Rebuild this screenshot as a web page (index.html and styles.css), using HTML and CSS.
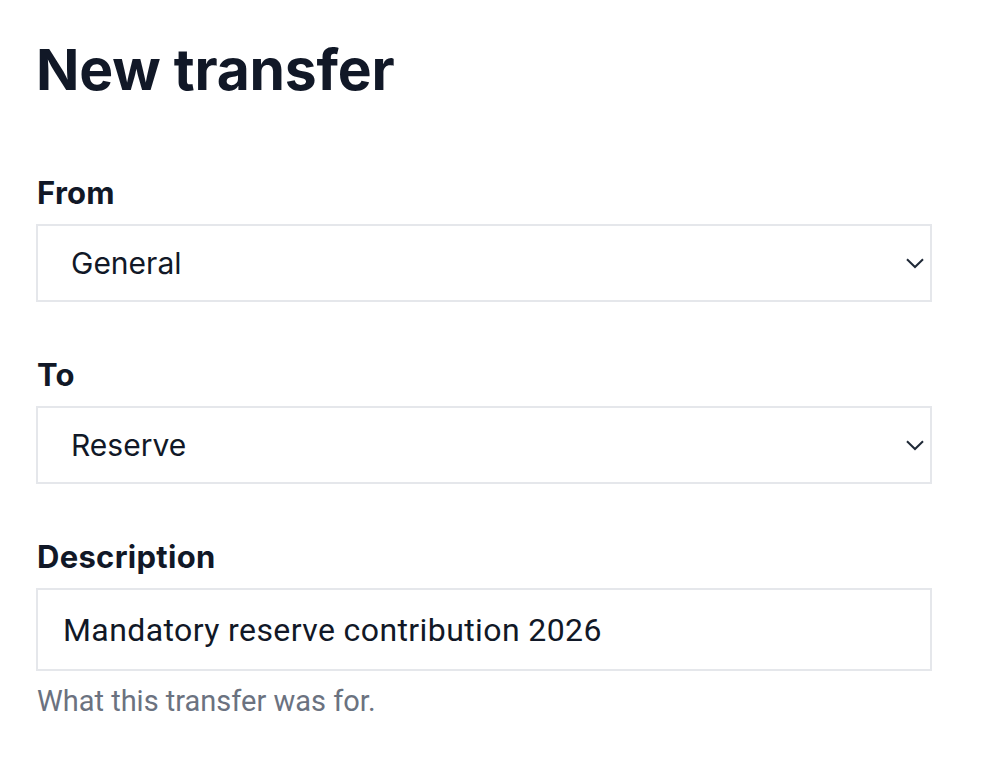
FILE: index.html
```html
<!DOCTYPE html>
<html lang="en">
<head>
<meta charset="utf-8">
<title>New transfer</title>
<link rel="stylesheet" href="styles.css">
</head>
<body>
<main class="page">
  <h1 class="title">New transfer</h1>
  <form class="form">
    <div class="field">
      <label class="label" for="from">From</label>
      <div class="select-wrap">
        <select class="select" id="from">
          <option>General</option>
          <option>Reserve</option>
        </select>
        <svg class="chevron" width="18" height="11" viewBox="0 0 18 11" aria-hidden="true"><path d="M1 1.2 L9 9 L17 1.2" fill="none" stroke="#1f2937" stroke-width="2"/></svg>
      </div>
    </div>
    <div class="field">
      <label class="label" for="to">To</label>
      <div class="select-wrap">
        <select class="select" id="to">
          <option>Reserve</option>
          <option>General</option>
        </select>
        <svg class="chevron" width="18" height="11" viewBox="0 0 18 11" aria-hidden="true"><path d="M1 1.2 L9 9 L17 1.2" fill="none" stroke="#1f2937" stroke-width="2"/></svg>
      </div>
    </div>
    <div class="field">
      <label class="label" for="desc">Description</label>
      <input class="input" id="desc" type="text" value="Mandatory reserve contribution 2026">
      <p class="help">What this transfer was for.</p>
    </div>
  </form>
</main>
</body>
</html>
```
FILE: styles.css
```css
html, body {
  margin: 0;
  padding: 0;
  background: #ffffff;
}
body {
  font-family: Inter, "Noto Sans", sans-serif;
  color: #111827;
}
.page {
  width: 896px;
  padding: 34px 0 0 36px;
}
.title {
  margin: 0;
  font-size: 57px;
  line-height: 72px;
  font-weight: 700;
  letter-spacing: -0.2px;
  color: #111827;
}
.form {
  display: flex;
  flex-direction: column;
  gap: 55px;
  margin-top: 69px;
}
.field {
  display: flex;
  flex-direction: column;
}
.label {
  display: block;
  font-size: 31px;
  line-height: 36px;
  font-weight: 700;
  letter-spacing: 0.3px;
  color: #111827;
  margin: 0 0 13px 1px;
}
.select-wrap {
  position: relative;
}
.select {
  display: block;
  width: 100%;
  height: 78px;
  box-sizing: border-box;
  border: 2px solid #e5e7eb;
  border-radius: 0;
  background: #ffffff;
  padding: 0 60px 0 33px;
  font-family: Inter, "Noto Sans", sans-serif;
  font-size: 30px;
  color: #111827;
  -webkit-appearance: none;
  appearance: none;
  outline: none;
}
.chevron {
  position: absolute;
  right: 8px;
  top: 34px;
  pointer-events: none;
}
.input {
  display: block;
  width: 100%;
  height: 83px;
  box-sizing: border-box;
  border: 2px solid #e5e7eb;
  border-radius: 0;
  padding: 0 25px;
  font-family: Roboto, "Liberation Sans", sans-serif;
  font-size: 32px;
  letter-spacing: 0.4px;
  color: #111827;
  outline: none;
  background: #ffffff;
}
.help {
  margin: 12px 0 0 1px;
  font-family: Roboto, "Liberation Sans", sans-serif;
  font-size: 29px;
  line-height: 36px;
  color: #6b7280;
}
```
